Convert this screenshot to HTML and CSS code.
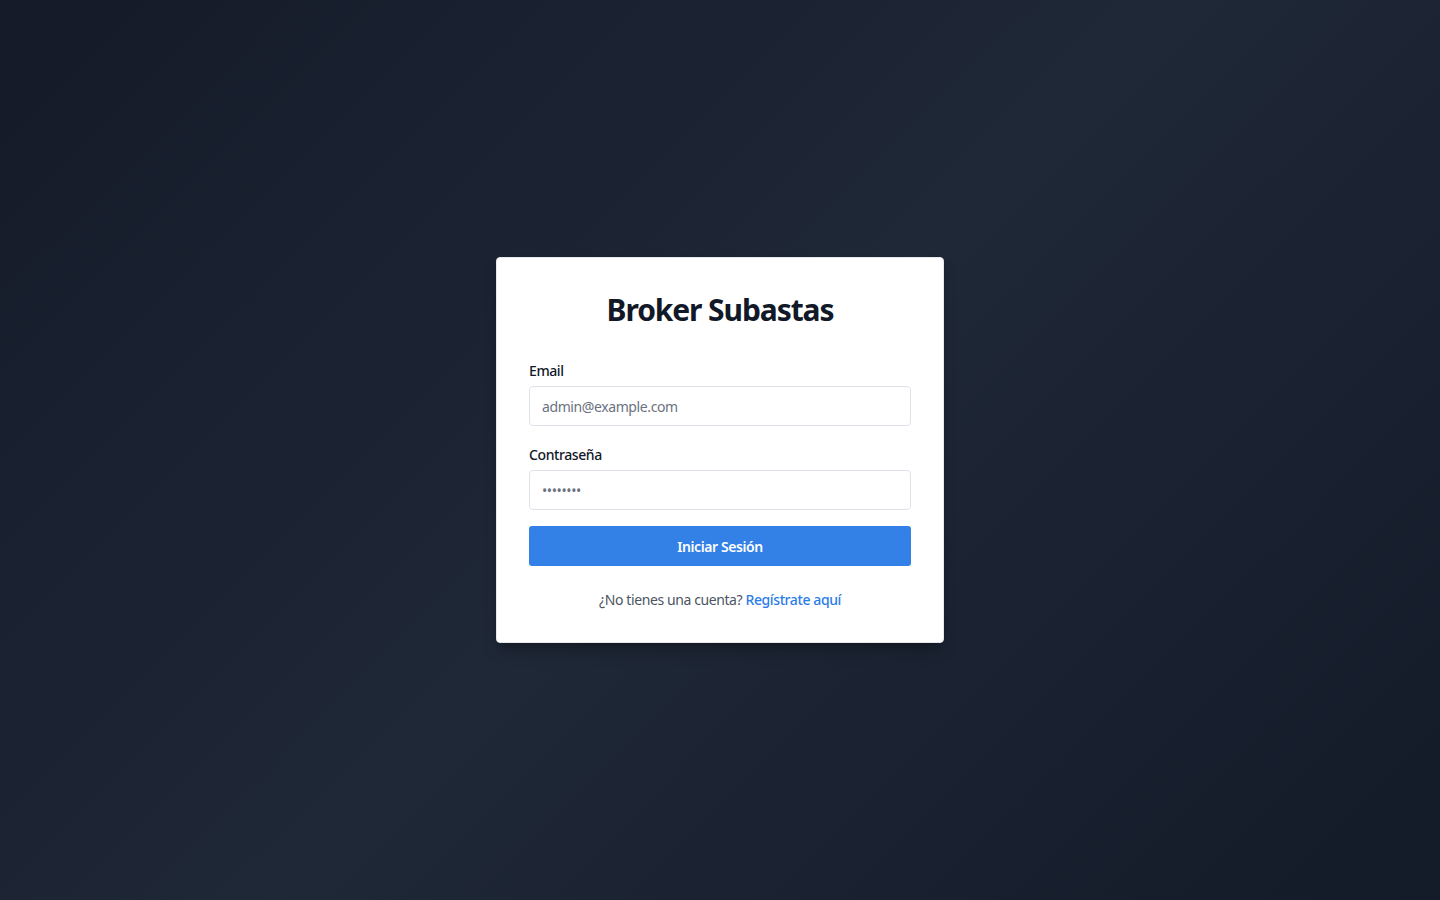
FILE: index.html
```html
<!DOCTYPE html>
<html lang="es">
<head>
<meta charset="utf-8">
<title>Broker Subastas</title>
<link rel="stylesheet" href="styles.css">
</head>
<body>
<main class="page">
  <section class="card">
    <h1 class="title">Broker Subastas</h1>
    <form class="form">
      <div class="field field-first">
        <label class="label" for="email">Email</label>
        <input class="input" id="email" type="email" placeholder="admin@example.com">
      </div>
      <div class="field">
        <label class="label" for="password">Contraseña</label>
        <input class="input" id="password" type="password" value="password">
      </div>
      <button class="button" type="button">Iniciar Sesión</button>
    </form>
    <p class="footer">¿No tienes una cuenta? <a class="link" href="#">Regístrate aquí</a></p>
  </section>
</main>
</body>
</html>
```
FILE: styles.css
```css
* { box-sizing: border-box; }
html, body { margin: 0; height: 100%; }
body {
  font-family: "Noto Sans", "Open Sans", Arial, sans-serif;
  background: linear-gradient(135deg, #141a28 0%, #1f2837 50%, #131a28 100%);
  color: #111827;
  letter-spacing: -0.4px;
}
.page {
  min-height: 100vh;
  display: flex;
  align-items: center;
  justify-content: center;
}
.card {
  width: 448px;
  background: #ffffff;
  border: 1px solid #e5e7eb;
  border-radius: 4px;
  padding: 32px;
  box-shadow: 0 10px 15px -3px rgba(0,0,0,0.25), 0 4px 6px -4px rgba(0,0,0,0.2);
}
.title {
  margin: 0 0 32px;
  padding-top: 2px;
  text-align: center;
  font-size: 30px;
  line-height: 36px;
  font-weight: 700;
  color: #111827;
  letter-spacing: -1.1px;
}
.form { display: flex; flex-direction: column; }
.field { margin-bottom: 16px; }
.field-first { margin-bottom: 18px; }
.label {
  display: block;
  font-size: 14px;
  line-height: 20px;
  font-weight: 500;
  color: #111827;
  padding-top: 1px;
  margin-bottom: 5px;
}
.input {
  display: block;
  width: 100%;
  height: 40px;
  padding: 0 12px;
  border: 1px solid #dfe3e9;
  border-radius: 4px;
  font-family: inherit;
  font-size: 14px;
  letter-spacing: -0.4px;
  color: #6b7280;
  background: #fff;
  outline: none;
}
.input::placeholder { color: #6b7280; }
.button {
  height: 40px;
  width: 100%;
  border: 0;
  border-radius: 3px;
  background: #3380e7;
  color: #ffffff;
  font-family: inherit;
  font-size: 14px;
  font-weight: 600;
  letter-spacing: -0.4px;
  cursor: pointer;
}
.footer {
  margin: 24px 0 0;
  text-align: center;
  font-size: 14px;
  line-height: 20px;
  color: #4b5563;
}
.link {
  color: #2b7de9;
  font-weight: 500;
  text-decoration: none;
}
```
